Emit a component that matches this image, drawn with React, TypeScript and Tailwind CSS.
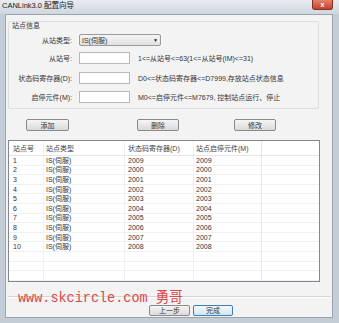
import React from 'react';

const rows = [
  { id: '1', type: 'IS(伺服)', d: '2009', m: '2009' },
  { id: '2', type: 'IS(伺服)', d: '2000', m: '2000' },
  { id: '3', type: 'IS(伺服)', d: '2001', m: '2001' },
  { id: '4', type: 'IS(伺服)', d: '2002', m: '2002' },
  { id: '5', type: 'IS(伺服)', d: '2003', m: '2003' },
  { id: '6', type: 'IS(伺服)', d: '2004', m: '2004' },
  { id: '7', type: 'IS(伺服)', d: '2005', m: '2005' },
  { id: '8', type: 'IS(伺服)', d: '2006', m: '2006' },
  { id: '9', type: 'IS(伺服)', d: '2007', m: '2007' },
  { id: '10', type: 'IS(伺服)', d: '2008', m: '2008' },
  { id: '', type: '', d: '', m: '' },
  { id: '', type: '', d: '', m: '' },
  { id: '', type: '', d: '', m: '' },
];

const font = { fontFamily: '"Liberation Sans", "Noto Sans CJK SC", sans-serif' };

const Button = ({ label, className = '' }: { label: string; className?: string }) => (
  <div
    className={`h-[12px] flex items-center justify-center rounded-[2px] border border-[#8a8a8a] bg-gradient-to-b from-[#f6f6f6] to-[#dadada] text-[7px] leading-none text-[#333] ${className}`}
  >
    {label}
  </div>
);

const FieldRow = ({
  label,
  hint,
  mt,
}: {
  label: string;
  hint: string;
  mt: string;
}) => (
  <div className={`flex items-center h-[12px] ${mt}`}>
    <div className="w-[63px] text-right text-[7px] leading-none text-[#333]">{label}</div>
    <div className="ml-[7px] w-[51px] h-[12px] border border-[#b5b8bf] bg-white" />
    <div className="ml-[8px] text-[7px] leading-none text-[#333] whitespace-nowrap">{hint}</div>
  </div>
);

export default function App() {
  return (
    <div className="w-[339px] h-[323px] flex flex-col bg-[#c4ccd6] overflow-hidden" style={font}>
      {/* title bar */}
      <div className="h-[14px] flex items-start justify-between bg-gradient-to-b from-[#e9edf2] to-[#cfd6df]">
        <div className="pl-[2px] pt-[2px] text-[7.5px] leading-[8px] text-[#1a1a1a]">CANLink3.0 配置向导</div>
        <div className="mr-[6px] w-[21px] h-[10px] rounded-b-[3px] border border-t-0 border-[#8b2f24] bg-gradient-to-b from-[#e8806a] to-[#c2412d] flex items-center justify-center text-white text-[7px] font-bold leading-none">
          x
        </div>
      </div>

      {/* client area */}
      <div className="relative ml-[5px] mr-[6px] mb-[5px] h-[304px] bg-[#f3f3f3] border border-[#9aa3ad] flex flex-col">
        {/* group box */}
        <div className="ml-[2px] mt-[6px] w-[311px] h-[88px] border border-[#dedede] rounded-[2px] flex flex-col">
          <div className="pl-[3px] h-[8px] text-[7px] leading-[8px] text-[#333]">站点信息</div>
          <div className="flex items-center h-[12px] mt-[4px]">
            <div className="w-[63px] text-right text-[7px] leading-none text-[#333]">从站类型:</div>
            <div className="ml-[7px] w-[82px] h-[12px] border border-[#9a9a9a] rounded-[2px] bg-gradient-to-b from-[#f6f6f6] to-[#e0e0e0] flex items-center justify-between px-[2px]">
              <span className="text-[7px] leading-none text-[#333]">IS(伺服)</span>
              <span className="text-[5px] leading-none text-[#222]">▼</span>
            </div>
          </div>
          <FieldRow label="从站号:" hint="1<=从站号<=63(1<=从站号(IM)<=31)" mt="mt-[6px]" />
          <FieldRow label="状态码寄存器(D):" hint="D0<=状态码寄存器<=D7999,存放站点状态信息" mt="mt-[8px]" />
          <FieldRow label="启停元件(M):" hint="M0<=启停元件<=M7679, 控制站点运行、停止" mt="mt-[7px]" />
        </div>

        {/* buttons */}
        <div className="flex mt-[10px] h-[12px]">
          <Button label="添加" className="ml-[20px] w-[43px]" />
          <Button label="删除" className="ml-[68px] w-[42px]" />
          <Button label="修改" className="ml-[55px] w-[42px]" />
        </div>

        {/* list */}
        <div className="ml-[2px] mt-[9px] w-[312px] h-[142px] border border-[#828790] bg-white overflow-hidden">
          <div className="flex h-[15px] items-center border-b border-[#e5e5e5] text-[7px] leading-none text-[#444]">
            <div className="w-[35px] h-full flex items-center pl-[4px] border-r border-[#efefef]">站点号</div>
            <div className="w-[81px] h-full flex items-center pl-[2px] border-r border-[#efefef]">站点类型</div>
            <div className="w-[69px] h-full flex items-center pl-[3px] border-r border-[#efefef]">状态码寄存器(D)</div>
            <div className="w-[68px] h-full flex items-center pl-[2px] border-r border-[#e5e5e5]">站点启停元件(M)</div>
            <div className="flex-1" />
          </div>
          {rows.map((r, i) => (
            <div key={i} className="flex h-[9.6px] items-center border-b border-[#f0f0f0] text-[7px] leading-none text-[#333]">
              <div className="w-[35px] h-full flex items-center pl-[4px] border-r border-[#f0f0f0]">{r.id}</div>
              <div className="w-[81px] h-full flex items-center pl-[2px] border-r border-[#f0f0f0]">{r.type}</div>
              <div className="w-[69px] h-full flex items-center pl-[3px] border-r border-[#f0f0f0]">{r.d}</div>
              <div className="w-[68px] h-full flex items-center pl-[2px] border-r border-[#eaeaea]">{r.m}</div>
              <div className="flex-1" />
            </div>
          ))}
        </div>

        {/* separator */}
        <div className="ml-[2px] mt-[14px] w-[323px] h-[2px] border-t border-[#d5d5d5] border-b border-b-white" />

        {/* bottom buttons */}
        <div className="flex mt-[7px] h-[11px]">
          <Button label="上一步" className="ml-[143px] w-[41px] !h-[11px]" />
          <Button label="完成" className="ml-[3px] w-[40px] !h-[11px] !border-[#3c7fb1] !from-[#f2f8fc] !to-[#d3e6f3]" />
        </div>

        {/* watermark */}
        <div
          className="absolute left-[12px] top-[276px] whitespace-nowrap text-[15px] leading-[15px] text-[#d9484a] origin-left scale-x-[0.9]"
          style={{ fontFamily: '"Liberation Mono", "Noto Sans CJK SC", monospace' }}
        >
          www.skcircle.com 勇哥
        </div>
      </div>
    </div>
  );
}
